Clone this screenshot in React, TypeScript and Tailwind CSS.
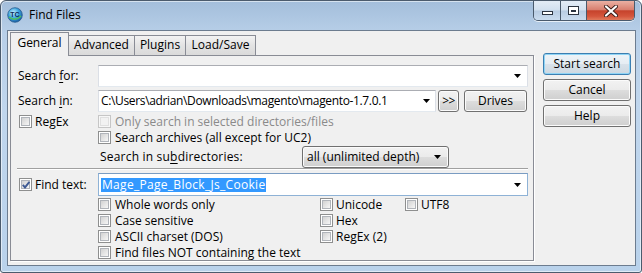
import React from 'react';

const FONT = "font-['Open_Sans',sans-serif]";

function Arrow() {
  return (
    <svg width="7" height="4" viewBox="0 0 7 4" className="shrink-0">
      <path d="M0 0H7L3.5 4Z" fill="#000" />
    </svg>
  );
}

function Box({ checked = false, disabled = false }: { checked?: boolean; disabled?: boolean }) {
  return (
    <span
      className={
        disabled
          ? 'relative block w-[13px] h-[13px] shrink-0 border border-[#c6c6c6] bg-[#f7f7f7] p-[1px]'
          : 'relative block w-[13px] h-[13px] shrink-0 border border-[#8e8f8f] bg-white p-[1px]'
      }
    >
      <span
        className={
          disabled
            ? 'block w-full h-full border border-[#e0e0e0] bg-[#f2f2f2]'
            : 'block w-full h-full border border-[#b0b4ba] bg-[linear-gradient(135deg,#d2d2d2,#f6f6f6)]'
        }
      />
      {checked && (
        <svg className="absolute left-[1px] top-[1px]" width="10" height="10" viewBox="0 0 10 10">
          <path d="M1.8 4.8L4 7.4L8.4 1.8" stroke="#3f5b94" strokeWidth="1.9" fill="none" strokeLinejoin="miter" />
        </svg>
      )}
    </span>
  );
}

function Btn({ children, isDefault = false, className = '' }: { children: React.ReactNode; isDefault?: boolean; className?: string }) {
  return (
    <div
      className={
        (isDefault
          ? 'border-[#3c7fb1] shadow-[inset_0_0_0_1px_#8fd4f5] bg-[linear-gradient(#eef4f8_0%,#e6edf3_49%,#d9e2ea_50%,#cdd8e1_100%)] '
          : 'border-[#707070] shadow-[inset_0_0_0_1px_#fbfbfb] bg-[linear-gradient(#f2f2f2_0%,#ebebeb_49%,#dddddd_50%,#cfcfcf_100%)] ') +
        'h-[22px] rounded-[3px] border flex items-center justify-center text-[12px] text-black leading-none ' +
        className
      }
    >
      {children}
    </div>
  );
}

function CheckLine({ label, checked = false, disabled = false, gap = 'ml-[4px]', className = '' }: { label: React.ReactNode; checked?: boolean; disabled?: boolean; gap?: string; className?: string }) {
  return (
    <div className={'flex items-center h-[13px] ' + className}>
      <Box checked={checked} disabled={disabled} />
      <span className={gap + ' whitespace-nowrap leading-none ' + (disabled ? 'text-[#8a8a8a]' : 'text-black')}>{label}</span>
    </div>
  );
}

function TcIcon() {
  return (
    <svg width="16" height="16" viewBox="0 0 16 16" className="shrink-0">
      <defs>
        <radialGradient id="g1" cx="0.4" cy="0.35" r="0.7">
          <stop offset="0" stopColor="#c9f0ff" />
          <stop offset="0.5" stopColor="#3fa7e0" />
          <stop offset="1" stopColor="#15569c" />
        </radialGradient>
      </defs>
      <circle cx="8" cy="8" r="7.3" fill="url(#g1)" stroke="#2a5d8f" strokeWidth="0.8" />
      <path d="M2 10 Q8 15 14 9" stroke="#4fc25a" strokeWidth="1.6" fill="none" />
      <text x="8" y="10" textAnchor="middle" fontSize="7" fontWeight="bold" fill="#0d2c5a" fontFamily="Liberation Sans, sans-serif">TC</text>
    </svg>
  );
}

export default function App() {
  return (
    <div className={'w-[642px] h-[273px] bg-white text-[12px] ' + FONT}>
      <div className="w-[642px] h-[273px] flex flex-col rounded-t-[6px] rounded-b-[3px] border border-[#4b5b6d] overflow-hidden bg-[linear-gradient(180deg,#a3bedb_0%,#b8cfe8_12%,#c0d6ed_40%,#b9d2eb_100%)] shadow-[inset_0_0_0_1px_rgba(255,255,255,0.55)]">
        {/* Title bar */}
        <div className="h-[29px] flex items-start shrink-0">
          <div className="pl-[6px] pt-[6px] flex items-center">
            <TcIcon />
            <span className="ml-[6px] text-[12px] text-black leading-none">Find Files</span>
          </div>
          <div className="ml-auto mr-[6px] flex h-[20px] rounded-b-[5px] border border-t-0 border-[#4a5a6c] overflow-hidden shadow-[0_1px_0_rgba(255,255,255,0.7)]">
            <div className="w-[27px] border-r border-[#4a5a6c] bg-[linear-gradient(#e3ecf6_0%,#d2e0ef_48%,#b8cce2_52%,#cadcef_100%)] flex justify-center">
              <span className="mt-[10px] w-[11px] h-[4px] bg-white border border-[#2c3440]" />
            </div>
            <div className="w-[26px] border-r border-[#4a5a6c] bg-[linear-gradient(#e3ecf6_0%,#d2e0ef_48%,#b8cce2_52%,#cadcef_100%)] flex justify-center">
              <span className="mt-[5px] w-[11px] h-[9px] border border-[#2c3440] bg-white p-[2px] pt-[3px]">
                <span className="block w-full h-full border border-[#2c3440] bg-[#c9d7e6]" />
              </span>
            </div>
            <div className="w-[47px] bg-[linear-gradient(#eab0a3_0%,#d98070_45%,#c6432c_52%,#d4553c_80%,#e07a5c_100%)] flex justify-center items-center">
              <svg width="14" height="12" viewBox="0 0 14 12">
                <path d="M2 1.5L12 10.5M12 1.5L2 10.5" stroke="#3a1e1a" strokeWidth="4" strokeLinecap="round" />
                <path d="M2 1.5L12 10.5M12 1.5L2 10.5" stroke="#ffffff" strokeWidth="2.2" strokeLinecap="round" />
              </svg>
            </div>
          </div>
        </div>

        {/* Client area */}
        <div className="ml-[6px] w-[629px] h-[236px] shrink-0 border border-[#6c7c8f] bg-[#f0f0f0] flex pl-[2px] pt-[1px]">
          {/* Tab control */}
          <div className="w-[524px] flex flex-col">
            <div className="h-[23px] flex items-start">
              <div className="relative z-10 w-[59px] h-[24px] border border-b-0 border-[#898c95] bg-[#f0f0f0] flex items-start justify-center pt-[4px] leading-none">
                General
              </div>
              <div className="mt-[3px] -ml-px w-[67px] h-[20px] border border-b-0 border-[#898c95] bg-[linear-gradient(#f3f3f3,#e3e3e3_50%,#dadada)] flex items-start justify-center pt-[3px] leading-none">
                Advanced
              </div>
              <div className="mt-[3px] -ml-px w-[52px] h-[20px] border border-b-0 border-[#898c95] bg-[linear-gradient(#f3f3f3,#e3e3e3_50%,#dadada)] flex items-start justify-center pt-[3px] leading-none">
                Plugins
              </div>
              <div className="mt-[3px] -ml-px w-[71px] h-[20px] border border-b-0 border-[#898c95] bg-[linear-gradient(#f3f3f3,#e3e3e3_50%,#dadada)] flex items-start justify-center pt-[3px] leading-none">
                Load/Save
              </div>
            </div>
            <div className="h-[206px] border border-[#898c95] bg-[#f0f0f0] shadow-[1px_1px_0_#ffffff] flex flex-col">
              {/* Search for */}
              <div className="mt-[9px] h-[22px] flex items-center">
                <div className="w-[87px] pl-[7px] leading-none whitespace-nowrap">
                  Search <span className="underline underline-offset-[2px]">f</span>or:
                </div>
                <div className="w-[430px] h-[22px] border border-[#abadb3] border-b-[#e3e9ef] border-x-[#dbdfe6] bg-white flex items-center justify-end pr-[6px]">
                  <Arrow />
                </div>
              </div>
              {/* Search in */}
              <div className="mt-[3px] h-[22px] flex items-center">
                <div className="w-[87px] pl-[7px] leading-none whitespace-nowrap">
                  Search <span className="underline underline-offset-[2px]">i</span>n:
                </div>
                <div className="w-[338px] h-[22px] border border-[#abadb3] border-b-[#e3e9ef] border-x-[#dbdfe6] bg-white flex items-center justify-between pl-[2px] pr-[5px]">
                  <span className="whitespace-nowrap leading-none tracking-[-0.35px]">C:\Users\adrian\Downloads\magento\magento-1.7.0.1</span>
                  <Arrow />
                </div>
                <Btn className="ml-[2px] w-[21px] text-[11px] tracking-[-0.5px]">&gt;&gt;</Btn>
                <Btn className="ml-[5px] w-[63px]">Drives</Btn>
              </div>
              {/* RegEx / only search */}
              <div className="mt-[3px] h-[13px] flex items-center">
                <div className="w-[87px] pl-[8px]">
                  <CheckLine label="RegEx" gap="ml-[3px]" />
                </div>
                <CheckLine label="Only search in selected directories/files" disabled />
              </div>
              {/* Search archives */}
              <div className="mt-[3px] h-[13px] flex items-center pl-[87px]">
                <CheckLine label="Search archives (all except for UC2)" />
              </div>
              {/* Subdirectories */}
              <div className="mt-[2px] h-[22px] flex items-center pl-[87px]">
                <div className="w-[204px] pl-[2px] leading-none whitespace-nowrap tracking-[0.2px]">
                  Search in su<span className="underline underline-offset-[2px]">b</span>directories:
                </div>
                <div className="w-[147px] h-[22px] rounded-[3px] border border-[#707070] shadow-[inset_0_0_0_1px_#fbfbfb] bg-[linear-gradient(#f2f2f2_0%,#ebebeb_49%,#dddddd_50%,#cfcfcf_100%)] flex items-center justify-between pl-[4px] pr-[7px]">
                  <span className="whitespace-nowrap leading-none">all (unlimited depth)</span>
                  <Arrow />
                </div>
              </div>
              {/* Separator */}
              <div className="ml-[6px] w-[511px] h-[2px] flex flex-col">
                <div className="h-px bg-[#a0a0a0]" />
                <div className="h-px bg-white" />
              </div>
              {/* Find text */}
              <div className="mt-[3px] h-[23px] flex items-center">
                <div className="w-[87px] pl-[8px]">
                  <CheckLine label="Find text:" checked gap="ml-[3px]" />
                </div>
                <div className="w-[430px] h-[23px] border border-[#8eb2d6] border-t-[#7a9cc2] bg-white flex items-center justify-between pl-[2px] pr-[6px]">
                  <span className="inline-block bg-[#3399ff] text-white leading-[14px] px-px tracking-[0.3px]">Mage_Page_Block_Js_Cookie</span>
                  <Arrow />
                </div>
              </div>
              {/* Options grid */}
              <div className="mt-[2px] pl-[87px] flex">
                <div className="w-[222px] flex flex-col gap-[3px]">
                  <CheckLine label="Whole words only" />
                  <CheckLine label="Case sensitive" />
                  <CheckLine label="ASCII charset (DOS)" />
                  <CheckLine label="Find files NOT containing the text" />
                </div>
                <div className="w-[85px] flex flex-col gap-[3px]">
                  <CheckLine label="Unicode" gap="ml-[3px]" />
                  <CheckLine label="Hex" gap="ml-[3px]" />
                  <CheckLine label="RegEx (2)" gap="ml-[3px]" />
                </div>
                <div className="flex flex-col gap-[3px]">
                  <CheckLine label="UTF8" gap="ml-[3px]" />
                </div>
              </div>
            </div>
          </div>
          {/* Right buttons */}
          <div className="ml-[9px] mt-[21px] w-[88px] flex flex-col gap-[4px]">
            <Btn isDefault>Start search</Btn>
            <Btn>Cancel</Btn>
            <Btn>Help</Btn>
          </div>
        </div>
      </div>
    </div>
  );
}
